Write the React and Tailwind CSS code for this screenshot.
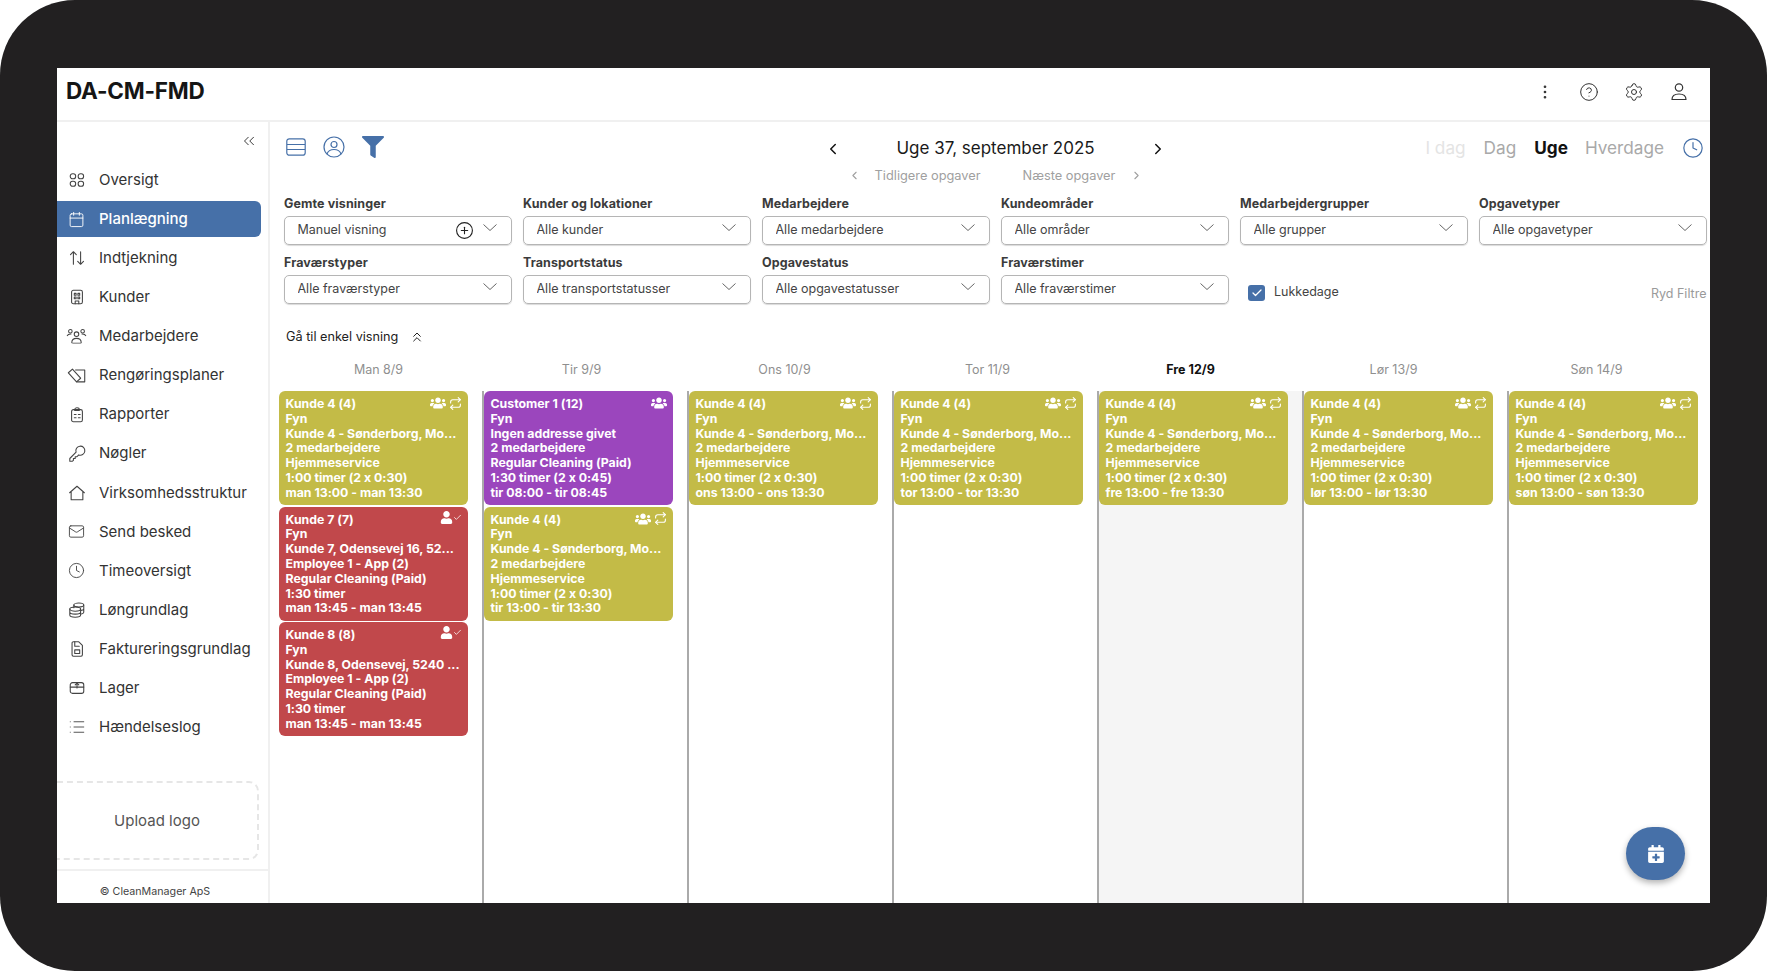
import React from "react";
import { ChevronLeft, ChevronRight, ChevronsLeft, ChevronsUp, CirclePlus, Clock, Check, EllipsisVertical, CircleHelp, Settings, Calendar, Mail, List } from "lucide-react";
import { FaUsers, FaFilter, FaUser, FaCalendarPlus } from "react-icons/fa";
import { FiRepeat } from "react-icons/fi";

const font = { fontFamily: '"Inter","Noto Sans",sans-serif' };

const S = ({ children }) => (
  <svg viewBox="0 0 20 20" className="w-[18px] h-[18px]" fill="none" stroke="currentColor" strokeWidth="1.2" strokeLinecap="round" strokeLinejoin="round">{children}</svg>
);

const nav = [
  ["Oversigt", <S><rect x="2.5" y="3" width="6" height="5.6" rx="2.6"/><rect x="11.300" y="3" width="6" height="5.6" rx="2.6"/><rect x="2.5" y="11.400" width="6" height="5.6" rx="2.6"/><rect x="11.300" y="11.400" width="6" height="5.6" rx="2.6"/></S>],
  ["Planlægning", <Calendar size={17} strokeWidth={1.3} />],
  ["Indtjekning", <S><path d="M6 17V3M2.8 6.2 6 3l3.2 3.2M14 3v14M10.8 13.8 14 17l3.2-3.2"/></S>],
  ["Kunder", <S><rect x="4" y="2.500" width="12" height="15" rx="2"/><rect x="7" y="6" width="2" height="2"/><rect x="11" y="6" width="2" height="2"/><rect x="7" y="10" width="2" height="2"/><rect x="11" y="10" width="2" height="2"/><path d="M8 17.500v-3h4v3"/></S>],
  ["Medarbejdere", <svg viewBox="0 0 22 18" className="w-[21px] h-[17px]" fill="none" stroke="currentColor" strokeWidth="1.1"><circle cx="11" cy="6.500" r="2.400"/><circle cx="4.500" cy="3.500" r="1.900"/><circle cx="17.500" cy="3.500" r="1.900"/><path d="M6 15.500c0-3 2-4.500 5-4.500s5 1.500 5 4.500c0 .6-10 .6-10 0zM1 8.500c1-2 3-2.200 4.500-2M21 8.500c-1-2-3-2.200-4.500-2"/></svg>],
  ["Rengøringsplaner", <svg viewBox="0 0 22 18" className="w-[20px] h-[17px]" fill="none" stroke="currentColor" strokeWidth="1.2" strokeLinejoin="round"><path d="M1.500 6 6 2l9 10-4.500 4z"/><path d="M9 3h10.500v13h-9"/></svg>],
  ["Rapporter", <S><rect x="4" y="4" width="12" height="13.500" rx="2"/><path d="M7.500 4c0-1 1-2 2.500-2s2.500 1 2.500 2v1h-5zM7 9.500h2M11.500 9.500h2M7 13h2M11.500 13h2"/></S>],
  ["Nøgler", <S><path d="M2 18v-3l7-7a5 5 0 1 1 3 3l-2 2H8v2H6v2l-1 1z"/></S>],
  ["Virksomhedsstruktur", <svg viewBox="0 0 20 20" className="w-[18px] h-[18px]" fill="none" stroke="currentColor" strokeWidth="1.2" strokeLinejoin="round"><path d="M1.500 10 10 2.500l8.500 7.500M3.500 9v8.500h13V9"/></svg>],
  ["Send besked", <Mail size={17} strokeWidth={1.3} />],
  ["Timeoversigt", <Clock size={17} strokeWidth={1.3} />],
  ["Løngrundlag", <S><ellipse cx="12" cy="4.500" rx="5.500" ry="2.200"/><path d="M6.500 4.500v3M17.500 4.500v8c0 .8-1 1.500-2.500 1.900M17.500 8.500c0 .8-1 1.500-2.500 1.900"/><ellipse cx="8" cy="9" rx="6" ry="2.300"/><path d="M2 9v6.500C2 17 4.500 18 8 18s6-1 6-2.500V9M2 12.300c0 1.300 2.500 2.300 6 2.300s6-1 6-2.300"/></S>],
  ["Faktureringsgrundlag", <S><path d="M4.500 3.500c0-.8.7-1.500 1.500-1.500h6l4 4v10.500c0 .8-.7 1.500-1.500 1.500H6c-.8 0-1.500-.7-1.500-1.500z"/><path d="M7.500 2v5h5M7.500 11h5.500v4H7.500z"/></S>],
  ["Lager", <S><rect x="2.500" y="4" width="15" height="12" rx="2.500"/><path d="M2.500 9h15M10 4v6M8 6.500l2-2 2 2"/></S>],
  ["Hændelseslog", <List size={18} strokeWidth={1.2} />],
];

const filters = [
  ["Gemte visninger", "Manuel visning", true],
  ["Kunder og lokationer", "Alle kunder"],
  ["Medarbejdere", "Alle medarbejdere"],
  ["Kundeområder", "Alle områder"],
  ["Medarbejdergrupper", "Alle grupper"],
  ["Opgavetyper", "Alle opgavetyper"],
  ["Fraværstyper", "Alle fraværstyper"],
  ["Transportstatus", "Alle transportstatusser"],
  ["Opgavestatus", "Alle opgavestatusser"],
  ["Fraværstimer", "Alle fraværstimer"],
];

const Filter = ({ label, value, plus }) => (
  <div className="flex flex-col w-[227.5px]">
    <div className="text-[12.5px] leading-[16px] font-bold text-[#3b3b3b] tracking-[0.1px] whitespace-nowrap">{label}</div>
    <div className="mt-[4px] h-[29px] rounded-[5px] border border-[#b5b5b5] shadow-[0_1px_1px_rgba(0,0,0,0.15)] flex items-center pl-[12.5px] pr-[14px] text-[12.5px] text-[#444]">
      <span className="flex-1 truncate">{value}</span>
      {plus && <CirclePlus size={19} strokeWidth={1.4} className="text-[#222] mr-[9px]" />}
      <svg viewBox="0 0 14 7" className="w-[14px] h-[7px] -mt-[7px] text-[#555]" fill="none" stroke="currentColor" strokeWidth="0.9"><path d="M0.500 0.500 7 6.500l6.500-6" /></svg>
    </div>
  </div>
);

const kunde4 = (d) => ({
  c: "bg-[#c3bb47]", t: "Kunde 4 (4)", rep: true,
  l: ["Fyn", "Kunde 4 - Sønderborg, Mo...", "2 medarbejdere", "Hjemmeservice", "1:00 timer (2 x 0:30)", `${d} 13:00 - ${d} 13:30`],
});
const days = [
  ["Man 8/9", [kunde4("man"),
    { c: "bg-[#c1484b]", t: "Kunde 7 (7)", user: true, l: ["Fyn", "Kunde 7, Odensevej 16, 52...", "Employee 1 - App (2)", "Regular Cleaning (Paid)", "1:30 timer", "man 13:45 - man 13:45"] },
    { c: "bg-[#c1484b]", t: "Kunde 8 (8)", user: true, l: ["Fyn", "Kunde 8, Odensevej, 5240 ...", "Employee 1 - App (2)", "Regular Cleaning (Paid)", "1:30 timer", "man 13:45 - man 13:45"] }]],
  ["Tir 9/9", [
    { c: "bg-[#9b46bd]", t: "Customer 1 (12)", only: true, l: ["Fyn", "Ingen addresse givet", "2 medarbejdere", "Regular Cleaning (Paid)", "1:30 timer (2 x 0:45)", "tir 08:00 - tir 08:45"] },
    kunde4("tir")]],
  ["Ons 10/9", [kunde4("ons")]],
  ["Tor 11/9", [kunde4("tor")]],
  ["Fre 12/9", [kunde4("fre")], true],
  ["Lør 13/9", [kunde4("lør")]],
  ["Søn 14/9", [kunde4("søn")]],
];

const Card = ({ c }) => (
  <div className={`${c.c} relative h-[114px] w-[189px] rounded-[6px] pl-[6.5px] pr-[6px] pt-[6px] text-white text-[12.3px] leading-[14.8px] font-bold`}>
    <div>{c.t}</div>
    {c.l.map((x, i) => <div key={i} className="whitespace-nowrap">{x}</div>)}
    <div className="absolute top-[4px] right-[6px] flex items-center gap-[3px]">
      {(c.rep || c.only) && <FaUsers size={16} />}
      {c.rep && <FiRepeat size={13} strokeWidth={2} />}
      {c.user && (
        <span className="flex items-center">
          <FaUser size={13} />
          <Check size={9} strokeWidth={2} />
        </span>
      )}
    </div>
  </div>
);

export default function App() {
  return (
    <div style={font} className="w-[1767px] h-[971px] bg-white overflow-hidden [font-feature-settings:'calt'_0]">
      <div className="w-full h-full rounded-[75px] bg-[#222021] pt-[68px] pl-[57px] pr-[57px] pb-[68px]">
        <div className="relative w-full h-full bg-white flex flex-col overflow-hidden text-[#333]">
          <header className="h-[54px] shrink-0 border-b-2 border-[#f0f0f0] flex items-center pl-[9px] pr-[21px]">
            <div className="flex-1 text-[22.5px] font-bold text-[#151515] tracking-[-0.2px] -mt-[7px]">DA-CM-FMD</div>
            <div className="flex items-center gap-[25px] text-[#333] -mt-[5px]">
              <EllipsisVertical size={18} strokeWidth={1.6} />
              <CircleHelp size={20} strokeWidth={1.2} />
              <Settings size={20} strokeWidth={1.2} />
              <svg viewBox="0 0 20 20" className="w-[20px] h-[20px]" fill="none" stroke="currentColor" strokeWidth="1.2"><circle cx="10" cy="5.500" r="3.700" /><path d="M3 17.500c0-3.500 3-5.500 7-5.500s7 2 7 5.500z" strokeLinejoin="round" /></svg>
            </div>
          </header>
          <div className="flex-1 flex min-h-0">
            <aside className="w-[213px] shrink-0 border-r-2 border-[#f0f0f0] flex flex-col">
              <div className="h-[40px] shrink-0 flex justify-end items-start pt-[10px] pr-[10px]">
                <ChevronsLeft size={18} strokeWidth={1.1} className="text-[#111]" />
              </div>
              <nav className="flex flex-col gap-[3.1px] pr-[7px]">
                {nav.map(([t, ic]) => {
                  const a = t === "Planlægning";
                  return (
                    <div key={t} className={`h-[36px] flex items-center pl-[9px] text-[15px] rounded-r-[6px] ${a ? "bg-[#4670a8] text-white font-medium" : "text-[#333]"}`}>
                      <span className={`w-[21px] flex justify-center ${a ? "text-white" : "text-[#444]"}`}>{ic}</span>
                      <span className="ml-[12px] whitespace-nowrap">{t}</span>
                    </div>
                  );
                })}
              </nav>
              <div className="mt-[36px] h-[79px] w-[202px] shrink-0 rounded-r-[10px] border-2 border-l-0 border-dashed border-[#e6e6e6] flex items-center justify-center text-[15px] text-[#555]">Upload logo</div>
              <div className="mt-[9px] flex-1 border-t-2 border-[#f0f0f0] flex items-center justify-center text-[10.7px] text-[#444] pt-[9px] pr-[15px]">© CleanManager ApS</div>
            </aside>
            <main className="flex-1 min-w-0 flex flex-col overflow-hidden">
              <div className="h-[74px] shrink-0 pl-[16px] pr-[6px] pt-[16px] flex items-start">
                <div className="w-[533px] flex items-center gap-[17px] text-[#4670a8] -mt-[2px]">
                  <svg viewBox="0 0 20 18" className="w-[20px] h-[18px]" fill="none" stroke="currentColor" strokeWidth="1.2"><rect x="0.800" y="0.800" width="18.400" height="16.400" rx="2.500" /><path d="M1 6.500h18M1 11.500h18" /></svg>
                  <svg viewBox="0 0 22 22" className="w-[22px] h-[22px]" fill="none" stroke="currentColor" strokeWidth="1.2"><circle cx="11" cy="11" r="10" /><circle cx="11" cy="8.500" r="3" /><path d="M4 18c1-3 3.500-4.500 7-4.500s6 1.500 7 4.500" /></svg>
                  <FaFilter size={22} />
                </div>
                <div className="w-[353px] flex flex-col items-center">
                  <div className="w-full h-[21px] flex items-center justify-between px-[5px] text-[#111]">
                    <ChevronLeft size={18} strokeWidth={2} />
                    <span className="text-[17px] text-[#1a1a1a]">Uge 37, september 2025</span>
                    <ChevronRight size={18} strokeWidth={2} />
                  </div>
                  <div className="mt-[7px] flex items-center text-[12.8px] text-[#a0a0a0]">
                    <ChevronLeft size={13} /><span className="ml-[14px]">Tidligere opgaver</span>
                    <span className="ml-[42px]">Næste opgaver</span><ChevronRight size={13} className="ml-[15px]" />
                  </div>
                </div>
                <div className="flex-1 flex items-center justify-end gap-[18px] text-[17.2px] text-[#a9a9a9] h-[21px] -mt-[1px]">
                  <span className="text-[#e4e4e4]">I dag</span>
                  <span>Dag</span>
                  <span className="font-bold text-[#111]">Uge</span>
                  <span className="-ml-[1px]">Hverdage</span>
                  <Clock size={22} strokeWidth={1.3} className="text-[#4670a8]" />
                </div>
              </div>
              <div className="shrink-0 pl-[14px] grid grid-cols-[repeat(6,227.5px)] gap-x-[11.5px] gap-y-[10px]">
                {filters.map(([l, v, p]) => <Filter key={l} label={l} value={v} plus={p} />)}
                <div className="col-span-2 flex items-center pt-[26px]">
                  <span className="ml-[8px] w-[17px] h-[16px] rounded-[3px] bg-[#4670a8] flex items-center justify-center"><Check size={12} strokeWidth={2.5} className="text-white" /></span>
                  <span className="ml-[9px] text-[12.5px] text-[#444]">Lukkedage</span>
                  <span className="ml-auto text-[12.5px] text-[#9a9a9a] pt-[3px]">Ryd Filtre</span>
                </div>
              </div>
              <div className="mt-[23px] pl-[16px] flex items-center gap-[11px] text-[12.7px] text-[#222] shrink-0">
                <span>Gå til enkel visning</span>
                <ChevronsUp size={16} strokeWidth={1.5} />
              </div>
              <div className="mt-[10px] ml-[7px] shrink-0 grid grid-cols-[repeat(7,203px)]">
                {days.map(([d, , today]) => (
                  <div key={d} className={`h-[35px] pb-[7px] flex justify-center items-center text-[12.5px] ${today ? "font-bold text-[#111]" : "text-[#8f8f8f]"}`}>{d}</div>
                ))}
              </div>
              <div className="flex-1 min-h-0 grid grid-cols-[repeat(7,205px)] ml-[7px]">
                {days.map(([d, cards, today], i) => (
                  <div key={d} className={`flex flex-col gap-[1.5px] border-l-2 ${i === 0 ? "border-transparent" : "border-[#aaaaaa]"} ${today ? "bg-[#f5f5f5]" : ""}`}>
                    {cards.map((c, j) => <Card key={j} c={c} />)}
                  </div>
                ))}
              </div>
            </main>
          </div>
          <div className="absolute left-[1569px] top-[759px] w-[59px] h-[53px] rounded-full bg-[#4670a8] shadow-[0_3px_6px_rgba(0,0,0,0.3)] flex items-center justify-center text-white">
            <FaCalendarPlus size={18} />
          </div>
        </div>
      </div>
    </div>
  );
}
